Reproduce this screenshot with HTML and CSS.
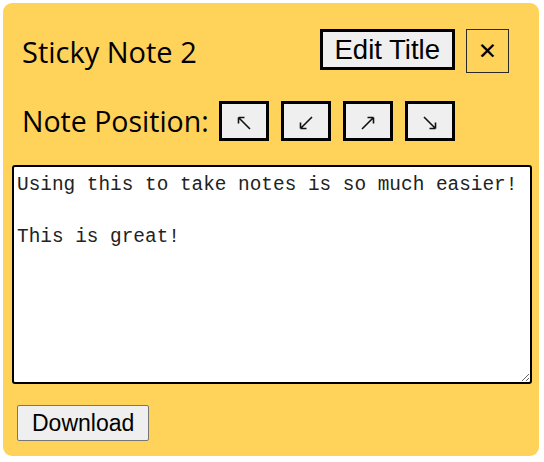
FILE: index.html
```html
<!DOCTYPE html>
<html>
<head>
<meta charset="utf-8">
<link rel="stylesheet" href="styles.css">
</head>
<body>
<div class="note">
  <div class="header">
    <h1 class="title">Sticky Note 2</h1>
    <div class="header-actions">
      <button class="edit-btn">Edit Title</button>
      <button class="close-btn">&#x2715;</button>
    </div>
  </div>
  <div class="position-row">
    <span class="position-label">Note Position:</span>
    <button class="pos-btn" aria-label="top left">
      <svg class="arrow" viewBox="0 0 16 16"><path d="M14 14L2.5 2.5M2.5 2.5h6M2.5 2.5v6"/></svg>
    </button>
    <button class="pos-btn" aria-label="bottom left">
      <svg class="arrow" viewBox="0 0 16 16"><path d="M14 2L2.5 13.5M2.5 13.5h6M2.5 13.5v-6"/></svg>
    </button>
    <button class="pos-btn" aria-label="top right">
      <svg class="arrow" viewBox="0 0 16 16"><path d="M2 14L13.5 2.5M13.5 2.5h-6M13.5 2.5v6"/></svg>
    </button>
    <button class="pos-btn" aria-label="bottom right">
      <svg class="arrow" viewBox="0 0 16 16"><path d="M2 2L13.5 13.5M13.5 13.5h-6M13.5 13.5v-6"/></svg>
    </button>
  </div>
  <textarea class="note-text">Using this to take notes is so much easier!

This is great!</textarea>
  <div class="footer">
    <button class="download-btn">Download</button>
  </div>
</div>
</body>
</html>
```
FILE: styles.css
```css
html, body {
  margin: 0;
  padding: 0;
  background: #ffffff;
}
.note {
  margin: 3px;
  width: 536px;
  height: 453px;
  box-sizing: border-box;
  background: #ffd25a;
  border-radius: 9px;
  padding: 26px 9px 0 9px;
  display: flex;
  flex-direction: column;
}
.header {
  display: flex;
  align-items: center;
  justify-content: space-between;
  padding: 0 21px 0 10px;
  height: 44px;
}
.title {
  margin: 0;
  font-family: "Open Sans", sans-serif;
  font-weight: 400;
  font-size: 29px;
  color: #000;
}
.header-actions {
  display: flex;
  align-items: center;
  gap: 11px;
}
.edit-btn {
  font-family: "Liberation Sans", Arial, sans-serif;
  font-size: 27.5px;
  background: #efefef;
  border: 3px solid #000;
  padding: 0 12px;
  height: 41px;
  margin-top: -3px;
  color: #000;
}
.close-btn {
  width: 43px;
  height: 44px;
  background: transparent;
  border: 1px solid #2a2a2a;
  font-family: "DejaVu Sans", sans-serif;
  font-weight: bold;
  font-size: 23px;
  padding: 0;
  color: #000;
}
.position-row {
  display: flex;
  align-items: center;
  gap: 12px;
  padding-left: 10px;
  margin-top: 28px;
  height: 40px;
}
.position-label {
  font-family: "Open Sans", sans-serif;
  font-size: 28.5px;
  margin-right: -2px;
}
.pos-btn {
  width: 50px;
  height: 40px;
  background: #efefef;
  border: 3px solid #000;
  padding: 0;
  display: flex;
  align-items: center;
  justify-content: center;
}
.arrow {
  width: 16px;
  height: 16px;
  fill: none;
  stroke: #111;
  stroke-width: 1.6;
  margin-top: 4px;
}
.note-text {
  margin-top: 24px;
  width: 520px;
  height: 219px;
  box-sizing: border-box;
  border: 2px solid #000;
  border-radius: 3px;
  padding: 5px 3px;
  font-family: "Liberation Mono", monospace;
  font-size: 19.4px;
  line-height: 26px;
  color: #222;
  background: #fff;
  resize: both;
}
.footer {
  margin-top: 21px;
  padding-left: 5px;
}
.download-btn {
  font-family: "Liberation Sans", Arial, sans-serif;
  font-size: 23px;
  background: #efefef;
  border: 1px solid #767676;
  border-radius: 2px;
  padding: 0 14px;
  height: 36px;
  color: #000;
}
```
